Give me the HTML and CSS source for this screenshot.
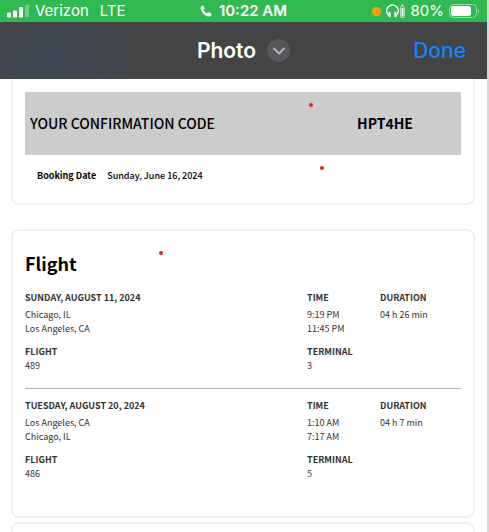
FILE: index.html
```
<!DOCTYPE html>
<html lang="en">
<head>
  <meta charset="UTF-8">
  <meta name="viewport" content="width=device-width, initial-scale=1.0">
  <title>Photo</title>
  <link rel="stylesheet" href="styles.css">
</head>
<body>
  <div class="screen">
    <div class="status-bar">
      <div class="status-left">
        <svg width="22" height="14" viewBox="0 0 22 14" fill="#fff">
          <rect x="0" y="8.500" width="4" height="5" rx="1"/>
          <rect x="6" y="6.500" width="4" height="7" rx="1"/>
          <rect x="12" y="3" width="4" height="10.500" rx="1"/>
          <rect x="18" y="0.500" width="4" height="13" rx="1" opacity="0.3"/>
        </svg>
        <span>Verizon</span>
        <span class="network">LTE</span>
      </div>
      <div class="status-time">
        <svg width="12" height="12" viewBox="0 0 12 12" fill="#fff">
          <path d="M2.1.7C.9 1.300.3 2.500.7 4c.9 3.400 3.900 6.500 7.300 7.400 1.500.4 2.800-.1 3.400-1.300.3-.6.1-1.100-.4-1.500L9.300 7.400c-.5-.3-1-.3-1.400.1l-.7.7c-.2.2-.4.2-.7.1C5.300 7.600 4.400 6.700 3.700 5.500c-.1-.3-.1-.5.1-.7l.6-.7c.4-.4.4-.9.1-1.400L3.500 1.100C3.200.5 2.700.4 2.100.7Z"/>
        </svg>
        <span>10:22 AM</span>
      </div>
      <div class="status-right">
        <span class="mic-dot"></span>
        <svg width="20" height="14" viewBox="0 0 20 14" fill="none" stroke="#fff">
          <path d="M3 11.500C.3 9.500.2 5.800 1.700 3.500 4 .2 9 .2 11.300 3.500 12.800 5.800 12.700 9.500 10 11.500" stroke-width="1.400"/>
          <path d="M3.600 8.800v3.400M9.400 8.800v3.400" stroke-width="2.200" stroke-linecap="round"/>
          <rect x="14.500" y="2.500" width="4" height="11" rx="1" stroke-width="1" opacity="0.6"/>
          <path d="M16.500 4v8.500" stroke-width="2"/>
          <path d="M15.500 1h2" stroke-width="1"/>
        </svg>
        <span>80%</span>
        <svg width="31" height="15" viewBox="0 0 31 15">
          <rect x="0.500" y="0.500" width="27" height="13" rx="4" fill="none" stroke="#fff" opacity="0.5"/>
          <rect x="2" y="2" width="20" height="10" rx="2.500" fill="#fff"/>
          <path d="M29 5c1.600.7 1.600 3.300 0 4Z" fill="#fff" opacity="0.5"/>
        </svg>
      </div>
    </div>

    <header class="nav-bar">
      <div class="nav-title">
        <h1>Photo</h1>
        <button class="nav-menu" type="button" aria-label="Options">
          <svg width="12" height="8" viewBox="0 0 12 8" fill="none" stroke="#b5b5ba" stroke-width="2" stroke-linecap="round" stroke-linejoin="round">
            <path d="M1 1.500l5 5 5-5"/>
          </svg>
        </button>
      </div>
      <button class="done" type="button">Done</button>
    </header>

    <main class="page">
      <section class="card booking">
        <div class="confirmation">
          <span class="confirmation-label">YOUR CONFIRMATION CODE</span>
          <strong class="confirmation-code">HPT4HE</strong>
        </div>
        <dl class="booking-date">
          <dt>Booking Date</dt>
          <dd>Sunday, June 16, 2024</dd>
        </dl>
        <span class="dot dot-code"></span>
        <span class="dot dot-date"></span>
      </section>

      <section class="card flights">
        <h2>Flight</h2>
        <span class="dot dot-flight"></span>

        <div class="trip">
          <div>
            <h3>SUNDAY, AUGUST 11, 2024</h3>
            <p>Chicago, IL</p>
            <p>Los Angeles, CA</p>
          </div>
          <div>
            <h3>TIME</h3>
            <p>9:19 PM</p>
            <p>11:45 PM</p>
          </div>
          <div>
            <h3>DURATION</h3>
            <p>04 h 26 min</p>
          </div>
          <div class="detail">
            <h3>FLIGHT</h3>
            <p>489</p>
          </div>
          <div class="detail">
            <h3>TERMINAL</h3>
            <p>3</p>
          </div>
        </div>

        <div class="trip">
          <div>
            <h3>TUESDAY, AUGUST 20, 2024</h3>
            <p>Los Angeles, CA</p>
            <p>Chicago, IL</p>
          </div>
          <div>
            <h3>TIME</h3>
            <p>1:10 AM</p>
            <p>7:17 AM</p>
          </div>
          <div>
            <h3>DURATION</h3>
            <p>04 h 7 min</p>
          </div>
          <div class="detail">
            <h3>FLIGHT</h3>
            <p>486</p>
          </div>
          <div class="detail">
            <h3>TERMINAL</h3>
            <p>5</p>
          </div>
        </div>
      </section>

      <section class="card next"></section>
    </main>
  </div>
</body>
</html>
```

FILE: styles.css
```
* {
  box-sizing: border-box;
}

body {
  margin: 0;
  background-color: #fefefe;
  color: #000;
  font-family: "Noto Sans CJK SC", "Noto Sans", sans-serif;
}

h1, h2, h3, p, dl, dd {
  margin: 0;
}

button {
  padding: 0;
  border: none;
  background: none;
  font-family: inherit;
  cursor: pointer;
}

.screen {
  display: flex;
  flex-direction: column;
  min-height: 100vh;
  border-right: 2px solid #d8d8d8;
}

/* status bar */
.status-bar {
  display: grid;
  grid-template-columns: 1fr auto 1fr;
  align-items: center;
  height: 22px;
  padding: 0 7px;
  background-color: #2fb950;
  color: #fff;
  font-family: Inter, sans-serif;
  font-size: 15px;
  line-height: 20px;
}

.status-left, .status-time, .status-right {
  display: flex;
  align-items: center;
}

.status-left {
  gap: 6px;
}

.network {
  margin-left: 5px;
}

.status-time {
  gap: 7px;
  font-weight: 600;
}

.status-right {
  justify-content: flex-end;
  gap: 5px;
}

.mic-dot {
  width: 9px;
  height: 9px;
  border-radius: 50%;
  background-color: #ff9f0a;
}

/* nav bar */
.nav-bar {
  display: grid;
  grid-template-columns: 1fr auto 1fr;
  align-items: center;
  height: 57px;
  padding: 0 21px;
  background: radial-gradient(circle at 10% 70%, #3e4752 0, #444 100px);
  font-family: Inter, sans-serif;
}

.nav-title {
  grid-column: 2;
  display: flex;
  align-items: center;
  gap: 11px;
}

.nav-title h1 {
  color: #fff;
  font-size: 21px;
  font-weight: 600;
  line-height: 28px;
}

.nav-menu {
  display: flex;
  align-items: center;
  justify-content: center;
  width: 23px;
  height: 23px;
  border-radius: 50%;
  background-color: #57575c;
}

.done {
  justify-self: end;
  color: #1684fc;
  font-size: 21px;
  font-weight: 500;
  line-height: 28px;
}

/* cards */
.page {
  display: flex;
  flex: 1;
  flex-direction: column;
  padding: 0 12px 0 11px;
}

.card {
  position: relative;
  padding: 0 12px;
  border: 2px solid #f0f0f0;
  border-radius: 8px;
  background-color: #fff;
}

.booking {
  padding-top: 13px;
  padding-bottom: 20px;
  border-top: none;
  border-radius: 0 0 8px 8px;
}

.confirmation {
  display: grid;
  grid-template-columns: 2fr 1fr;
  align-items: center;
  padding: 20px 5px;
  background-color: #ccc;
  font-size: 14px;
  line-height: 23px;
}

.confirmation-label {
  font-weight: 500;
}

.confirmation-code {
  text-align: center;
}

.booking-date {
  display: flex;
  gap: 11px;
  padding: 14px 12px 0;
  font-size: 9px;
  font-weight: 500;
  line-height: 14px;
}

.booking-date dt {
  font-weight: 700;
}

.flights {
  margin-top: 24px;
  padding-top: 17px;
  padding-bottom: 35px;
}

.flights h2 {
  margin-bottom: 13px;
  font-size: 18px;
  line-height: 30px;
}

.trip {
  display: grid;
  grid-template-columns: 282fr 73fr 81fr;
  row-gap: 9px;
  color: #333;
  font-size: 9px;
  line-height: 14px;
}

.trip + .trip {
  margin-top: 15px;
  padding-top: 10px;
  border-top: 1px solid #b0b0b0;
}

.trip h3 {
  margin-bottom: 3px;
  font-size: 9px;
}

.trip .detail h3 {
  margin-bottom: 0;
}

.next {
  flex: 1;
  margin-top: 4px;
  border-bottom: none;
  border-radius: 8px 8px 0 0;
}

/* markers over the cards */
.dot {
  position: absolute;
  width: 4px;
  height: 4px;
  border-radius: 50%;
  background-color: #ec1c24;
}

.dot-code {
  top: 24px;
  left: 296px;
}

.dot-date {
  top: 87px;
  left: 307px;
}

.dot-flight {
  top: 20px;
  left: 146px;
}
```
